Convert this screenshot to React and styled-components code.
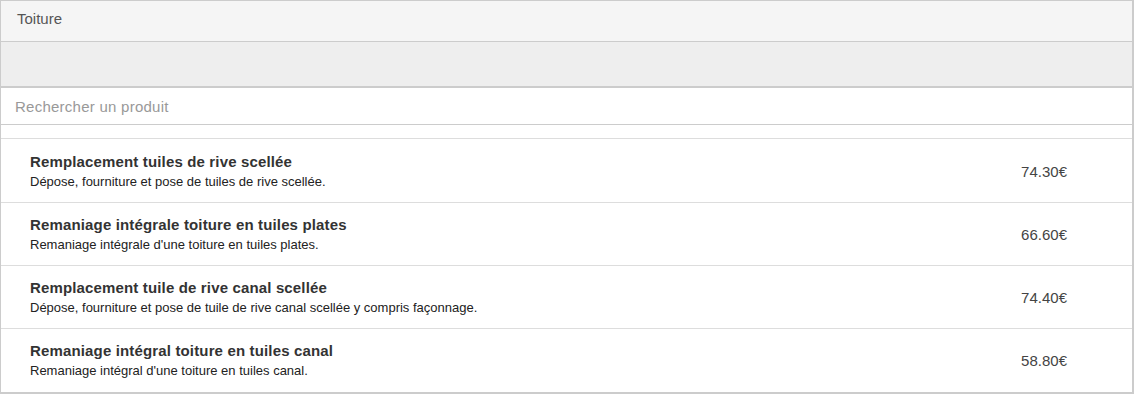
import React from "react";
import styled, { createGlobalStyle } from "styled-components";

const Global = createGlobalStyle`
  html, body { margin: 0; padding: 0; background: #fff; }
  body { font-family: "Liberation Sans", Arial, sans-serif; color: #333; }
  * { box-sizing: border-box; }
`;

const Panel = styled.div`
  width: 1134px;
  border: 1px solid #ccc;
  border-right-width: 2px;
  border-bottom-width: 2px;
  background: #fff;
`;

const Header = styled.div`
  height: 41px;
  background: #f5f5f5;
  border-bottom: 1px solid #ccc;
  padding: 9px 16px;
  font-size: 15px;
  line-height: 18px;
  color: #555;
`;

const Band = styled.div`
  height: 46px;
  background: #eee;
  border-bottom: 2px solid #ccc;
`;

const Search = styled.input`
  display: block;
  width: 100%;
  height: 37px;
  border: none;
  border-bottom: 1px solid #ccc;
  padding: 0 14px;
  font-family: "Liberation Sans", Arial, sans-serif;
  font-size: 15px;
  letter-spacing: 0.25px;
  color: #333;
  outline: none;
  &::placeholder { color: #999; }
`;

const Spacer = styled.div`
  height: 14px;
  border-bottom: 1px solid #ddd;
`;

const List = styled.div`
  padding-top: 1px;
`;

const Row = styled.div`
  display: flex;
  align-items: center;
  height: 63px;
  padding: 0 65px 0 29px;
  border-bottom: 1px solid #ddd;
  &:last-child { border-bottom: none; }
`;

const Info = styled.div`
  flex: 1;
  display: flex;
  flex-direction: column;
  gap: 3px;
`;

const Title = styled.div`
  font-size: 15px;
  font-weight: bold;
  letter-spacing: 0.15px;
  line-height: 18px;
  color: #333;
`;

const Desc = styled.div`
  font-size: 13px;
  line-height: 16px;
  color: #222;
`;

const Price = styled.div`
  font-size: 15px;
  color: #444;
`;

const items = [
  ["Remplacement tuiles de rive scellée", "Dépose, fourniture et pose de tuiles de rive scellée.", "74.30€"],
  ["Remaniage intégrale toiture en tuiles plates", "Remaniage intégrale d'une toiture en tuiles plates.", "66.60€"],
  ["Remplacement tuile de rive canal scellée", "Dépose, fourniture et pose de tuile de rive canal scellée y compris façonnage.", "74.40€"],
  ["Remaniage intégral toiture en tuiles canal", "Remaniage intégral d'une toiture en tuiles canal.", "58.80€"],
];

export default function App() {
  return (
    <>
      <Global />
      <Panel>
        <Header>Toiture</Header>
        <Band />
        <Search placeholder="Rechercher un produit" />
        <Spacer />
        <List>
          {items.map(([t, d, p]) => (
            <Row key={t}>
              <Info>
                <Title>{t}</Title>
                <Desc>{d}</Desc>
              </Info>
              <Price>{p}</Price>
            </Row>
          ))}
        </List>
      </Panel>
    </>
  );
}
